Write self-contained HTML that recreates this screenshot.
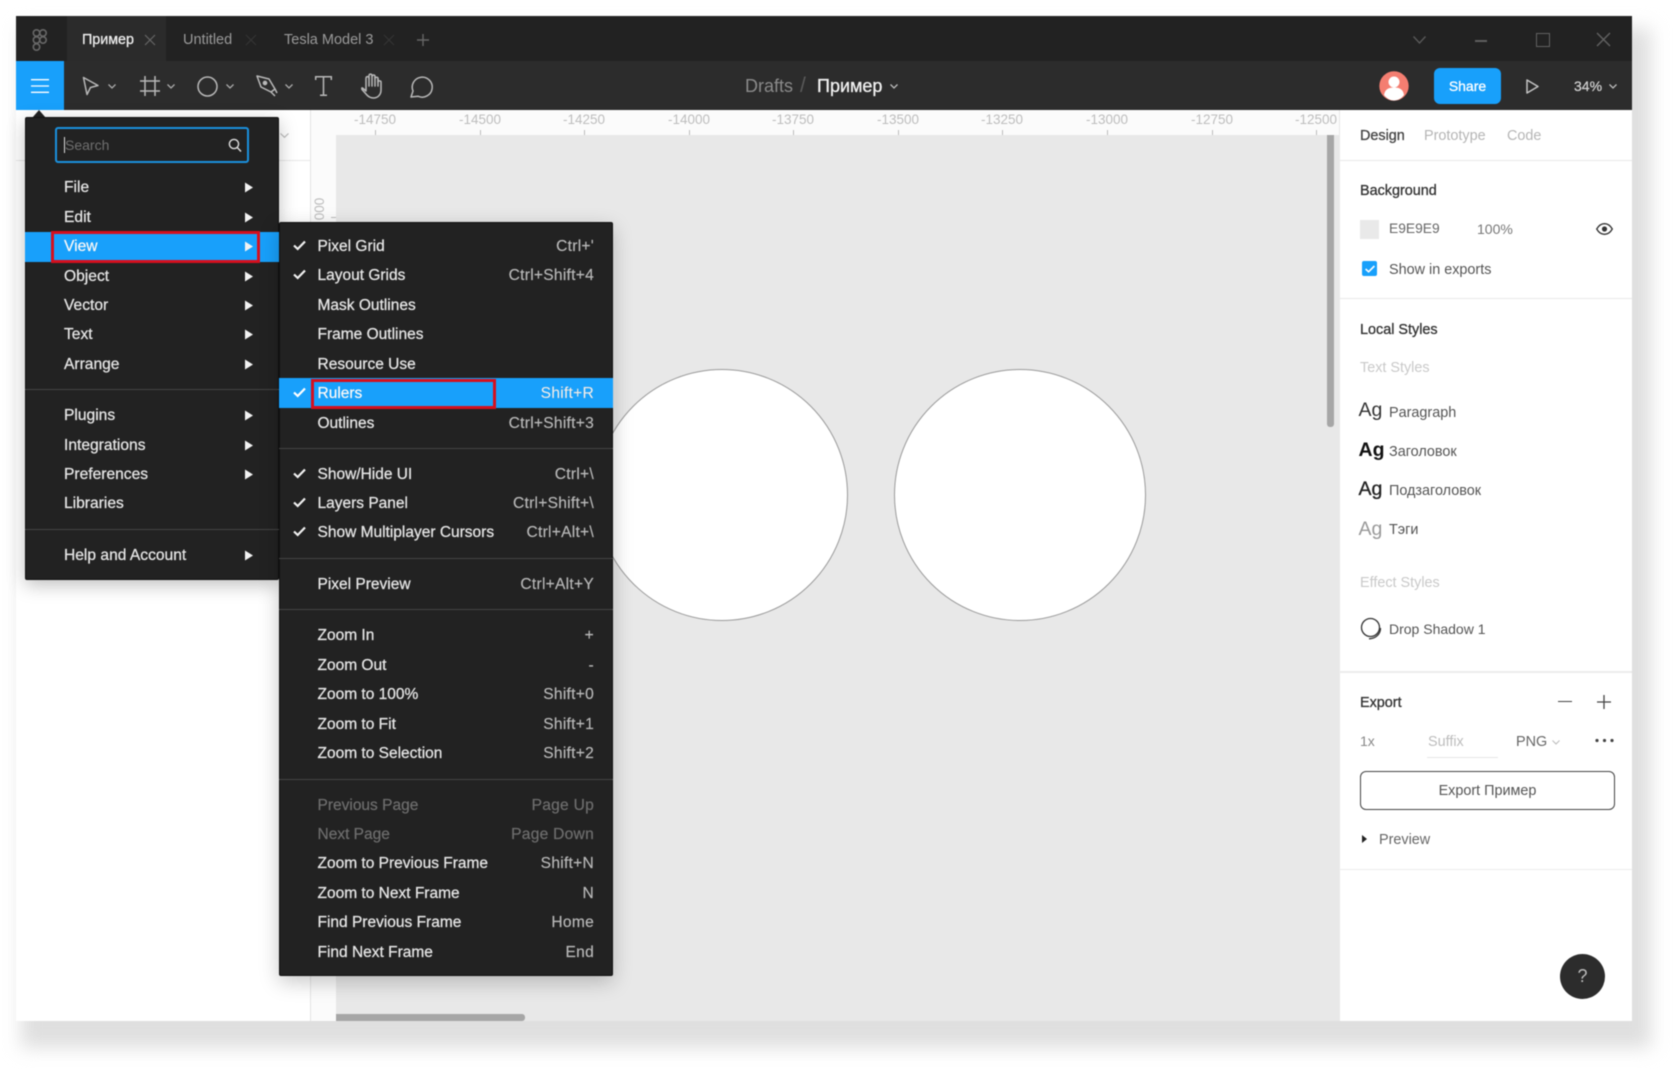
<!DOCTYPE html>
<html lang="en"><head><meta charset="utf-8"><title>Figma View Rulers</title>
<style>
html,body{margin:0;padding:0;width:1680px;height:1069px;overflow:hidden;background:#fff}
#r{position:absolute;left:0;top:0;width:1680px;height:1069px;overflow:hidden;font-family:"Liberation Sans","Noto Sans CJK SC",sans-serif;filter:blur(.45px)}
.b{position:absolute}
.t{position:absolute;white-space:nowrap;transform:translateY(-50%);line-height:20px}
.m{font-size:15.6px;color:#e6e6e6;-webkit-text-stroke:.25px #e6e6e6;left:64px;transform:translateY(calc(-50% + 1px))}
.s{font-size:15.5px;color:#e6e6e6;-webkit-text-stroke:.25px #e6e6e6;left:317.5px;transform:translateY(calc(-50% + 1px))}
.k{font-size:15.6px;letter-spacing:.25px;color:#b9b9b9;-webkit-text-stroke:.15px #b9b9b9;right:1086px;transform:translateY(calc(-50% + 1px))}
.d{color:#6e6e6e;-webkit-text-stroke:.2px #6e6e6e}
.rn{font-size:13.5px;color:#bdbdbd;transform:translate(-50%,-50%)}
.tk{position:absolute;top:130px;width:1px;height:5px;background:#bbb}
.p{font-size:14.4px;color:#555;transform:translateY(calc(-50% + 1px))}
.h{font-size:14.4px;color:#333;-webkit-text-stroke:.3px #333;left:1360px;transform:translateY(calc(-50% + 1px))}
.g{font-size:14.4px;color:#c9c9c9;left:1360px;transform:translateY(calc(-50% + 1px))}
.ag{font-size:19.5px;left:1358.5px;color:#333}
.ar{position:absolute;left:245px;width:0;height:0;border-left:8px solid #f2f2f2;border-top:5.5px solid transparent;border-bottom:5.5px solid transparent;transform:translateY(calc(-50% + .5px))}
.dv{position:absolute;height:1px;background:#444}
.ck{position:absolute;left:293px;transform:translateY(calc(-50% - .5px))}
svg{position:absolute;overflow:visible}
</style></head><body><div id="r">

<!-- window shadow -->
<div class="b" style="left:21px;top:28px;width:1630px;height:1020px;background:#dfdfdf;filter:blur(9px)"></div>
<!-- window -->
<div class="b" style="left:16px;top:16px;width:1616px;height:1005px;background:#fff"></div>

<!-- canvas -->
<div class="b" style="left:336px;top:135px;width:1004px;height:886px;background:#e8e8e8"></div>
<!-- rulers -->
<div class="b" style="left:310px;top:110px;width:1030px;height:25px;background:#fbfbfb"></div>
<div class="b" style="left:310px;top:110px;width:26px;height:911px;background:#fbfbfb;border-left:1px solid #e5e5e5;box-sizing:border-box"></div>
<div class="b" style="left:16px;top:160px;width:294px;height:1px;background:#e8e8e8"></div>
<svg style="left:280px;top:133px" width="9" height="5" fill="none" stroke="#bbb" stroke-width="1.2"><path d="M.5 .5L4.5 4.3L8.5 .5"/></svg>
<div class="t rn" style="left:375px;top:120px">-14750</div><i class="tk" style="left:375px"></i>
<div class="t rn" style="left:480px;top:120px">-14500</div><i class="tk" style="left:480px"></i>
<div class="t rn" style="left:584px;top:120px">-14250</div><i class="tk" style="left:584px"></i>
<div class="t rn" style="left:689px;top:120px">-14000</div><i class="tk" style="left:689px"></i>
<div class="t rn" style="left:793px;top:120px">-13750</div><i class="tk" style="left:793px"></i>
<div class="t rn" style="left:898px;top:120px">-13500</div><i class="tk" style="left:898px"></i>
<div class="t rn" style="left:1002px;top:120px">-13250</div><i class="tk" style="left:1002px"></i>
<div class="t rn" style="left:1107px;top:120px">-13000</div><i class="tk" style="left:1107px"></i>
<div class="t rn" style="left:1212px;top:120px">-12750</div><i class="tk" style="left:1212px"></i>
<div class="t rn" style="left:1316px;top:120px">-12500</div><i class="tk" style="left:1316px"></i>
<div class="t rn" style="left:320px;top:209px;transform:translate(-50%,-50%) rotate(-90deg)">000</div>
<div class="b" style="left:331px;top:217px;width:5px;height:1px;background:#bbb"></div>

<!-- circles -->
<div class="b" style="left:596px;top:369px;width:252px;height:252px;border-radius:50%;background:#fff;border:1px solid #9a9a9a;box-sizing:border-box"></div>
<div class="b" style="left:894px;top:369px;width:252px;height:252px;border-radius:50%;background:#fff;border:1px solid #9a9a9a;box-sizing:border-box"></div>

<!-- scrollbars -->
<div class="b" style="left:1327px;top:135px;width:7px;height:292px;background:#a6a6a6;border-radius:0 0 3px 3px"></div>
<div class="b" style="left:336px;top:1014px;width:189px;height:7px;background:#a6a6a6;border-radius:0 3px 3px 0"></div>

<!-- tab bar -->
<div class="b" style="left:16px;top:16px;width:1616px;height:45px;background:#222"></div>
<div class="b" style="left:67px;top:16px;width:99px;height:45px;background:#2b2b2b"></div>
<svg style="left:32px;top:29px" width="16" height="22" viewBox="0 0 16 22" fill="none" stroke="#686868" stroke-width="1.6"><circle cx="4.5" cy="4" r="3.2"/><circle cx="11" cy="4" r="3.2"/><circle cx="4.5" cy="11" r="3.2"/><circle cx="11" cy="11" r="3.2"/><circle cx="4.5" cy="18" r="3.2"/></svg>
<div class="t" style="left:82px;top:40px;font-size:14.3px;color:#f0f0f0;-webkit-text-stroke:.25px #f0f0f0">Пример</div>
<svg style="left:145px;top:35px" width="10" height="10" stroke="#666" stroke-width="1.2"><path d="M0 0L10 10M10 0L0 10"/></svg>
<div class="t" style="left:183px;top:40px;font-size:14.5px;color:#9a9a9a">Untitled</div>
<svg style="left:246px;top:35px" width="10" height="10" stroke="#343434" stroke-width="1.2"><path d="M0 0L10 10M10 0L0 10"/></svg>
<div class="t" style="left:284px;top:40px;font-size:14.5px;color:#9a9a9a">Tesla Model 3</div>
<svg style="left:384px;top:35px" width="10" height="10" stroke="#343434" stroke-width="1.2"><path d="M0 0L10 10M10 0L0 10"/></svg>
<svg style="left:417px;top:34px" width="12" height="12" stroke="#666" stroke-width="1.4"><path d="M6 0V12M0 6H12"/></svg>
<svg style="left:1413px;top:36px" width="13" height="8" fill="none" stroke="#5a5a5a" stroke-width="1.3"><path d="M.5 .5L6.5 7L12.5 .5"/></svg>
<div class="b" style="left:1475px;top:40px;width:12px;height:1.5px;background:#5f5f5f"></div>
<div class="b" style="left:1536px;top:33px;width:12px;height:12px;border:1.4px solid #626262"></div>
<svg style="left:1597px;top:33px" width="13" height="13" stroke="#626262" stroke-width="1.4"><path d="M0 0L13 13M13 0L0 13"/></svg>

<!-- toolbar -->
<div class="b" style="left:16px;top:61px;width:1616px;height:49px;background:#2c2c2c"></div>
<div class="b" style="left:16px;top:61px;width:48px;height:49px;background:#18a0fb"></div>
<svg style="left:31px;top:79px" width="18" height="14" stroke="#fff" stroke-width="1.3"><path d="M0 .7H18M0 7H18M0 13.3H18"/></svg>
<svg style="left:82px;top:76px" width="18" height="20" fill="none" stroke="#b8b8b8" stroke-width="1.5" stroke-linejoin="round"><path d="M1.5 1.5L16 9.5L8.5 11.5L5 18.5Z"/></svg>
<svg style="left:108px;top:84px" width="8" height="5" fill="none" stroke="#aaa" stroke-width="1.3"><path d="M.5 .5L4 4L7.5 .5"/></svg>
<svg style="left:140px;top:76px" width="20" height="20" stroke="#b8b8b8" stroke-width="1.5" fill="none"><path d="M5 0V20M15 0V20M0 5H20M0 15H20"/></svg>
<svg style="left:167px;top:84px" width="8" height="5" fill="none" stroke="#aaa" stroke-width="1.3"><path d="M.5 .5L4 4L7.5 .5"/></svg>
<svg style="left:197px;top:76px" width="21" height="21" fill="none" stroke="#b8b8b8" stroke-width="1.5"><circle cx="10.5" cy="10.5" r="9.5"/></svg>
<svg style="left:226px;top:84px" width="8" height="5" fill="none" stroke="#aaa" stroke-width="1.3"><path d="M.5 .5L4 4L7.5 .5"/></svg>
<svg style="left:256px;top:75px" width="22" height="22" fill="none" stroke="#b8b8b8" stroke-width="1.5" stroke-linejoin="round"><path d="M1 1L13 4L19 14L15 17L5 12Z"/><path d="M15 17L19 21M19 14L21 18"/><circle cx="9" cy="8" r="1.6" fill="#b8b8b8"/></svg>
<svg style="left:285px;top:84px" width="8" height="5" fill="none" stroke="#aaa" stroke-width="1.3"><path d="M.5 .5L4 4L7.5 .5"/></svg>
<svg style="left:315px;top:76px" width="17" height="20" fill="none" stroke="#b8b8b8" stroke-width="1.5"><path d="M.7 4V.8H16.3V4M8.5 .8V19.3M5 19.3H12"/></svg>
<svg style="left:361px;top:73px" width="23" height="26" fill="none" stroke="#b8b8b8" stroke-width="1.5" stroke-linecap="round" stroke-linejoin="round"><path d="M1.5 15L5 18V5.5C5 3 8 3 8 5.5V3C8 .5 11 .5 11 3V3.5C11 1.5 14 1.5 14 3.5V5.5C14 3.8 17 3.8 17 5.5V9C17 7.5 20 7.5 20 9V17C20 22 16.5 25 12.5 25C9 25 7 23.5 5 21L1 16.5C.5 15 1 14.5 1.5 15Z"/><path d="M8 5V13M11 3V13M14 4V13M17 6V13"/></svg>
<svg style="left:410px;top:75px" width="23" height="23" fill="none" stroke="#b8b8b8" stroke-width="1.5" stroke-linejoin="round"><path d="M1 22L3 16A10 10 0 1 1 8 21.2Z"/></svg>

<div class="t" style="left:745px;top:86px;font-size:18px;color:#8a8a8a">Drafts</div>
<div class="t" style="left:800px;top:86px;font-size:21px;color:#5a5a5a">/</div>
<div class="t" style="left:817px;top:86px;font-size:18px;color:#f2f2f2;-webkit-text-stroke:.3px #f2f2f2">Пример</div>
<svg style="left:890px;top:84px" width="8" height="5" fill="none" stroke="#bbb" stroke-width="1.3"><path d="M.5 .5L4 4L7.5 .5"/></svg>

<svg style="left:1379px;top:71px" width="30" height="30"><circle cx="15" cy="15" r="14.7" fill="#f47e71"/><circle cx="15" cy="11" r="5.5" fill="#fff"/><path d="M5 24C6 18 10 16.5 15 16.5C20 16.5 24 18 25 24C22 28 18 29.5 15 29.5C12 29.5 8 28 5 24Z" fill="#fff"/></svg>
<div class="b" style="left:1434px;top:68px;width:67px;height:36px;background:#18a0fb;border-radius:6px"></div>
<div class="t" style="left:1434px;width:67px;text-align:center;top:86px;font-size:14px;color:#fff;-webkit-text-stroke:.3px #fff">Share</div>
<svg style="left:1526px;top:79px" width="13" height="15" fill="none" stroke="#c4c4c4" stroke-width="1.5" stroke-linejoin="round"><path d="M1 1V14L12 7.5Z"/></svg>
<div class="t" style="left:1574px;top:86px;font-size:14px;color:#d0d0d0;-webkit-text-stroke:.25px #d0d0d0">34%</div>
<svg style="left:1609px;top:84px" width="8" height="5" fill="none" stroke="#bbb" stroke-width="1.3"><path d="M.5 .5L4 4L7.5 .5"/></svg>

<!-- right panel -->
<div class="b" style="left:1339px;top:110px;width:293px;height:911px;background:#fff;border-left:1px solid #e8e8e8;box-sizing:border-box"></div>
<div class="t" style="left:1360px;top:136px;font-size:14.4px;color:#444;-webkit-text-stroke:.3px #444">Design</div>
<div class="t" style="left:1424px;top:136px;font-size:14.4px;color:#b5b5b5">Prototype</div>
<div class="t" style="left:1507px;top:136px;font-size:14.4px;color:#b5b5b5">Code</div>
<div class="b" style="left:1339px;top:160px;width:293px;height:1px;background:#e8e8e8"></div>
<div class="t h" style="top:190px">Background</div>
<div class="b" style="left:1360px;top:220px;width:19px;height:19px;background:#e9e9e9"></div>
<div class="t p" style="left:1389px;top:228px;color:#666;font-size:13.8px">E9E9E9</div>
<div class="t p" style="left:1477px;top:228px;color:#777;font-size:14px">100%</div>
<svg style="left:1596px;top:223px" width="17" height="12" fill="none" stroke="#333" stroke-width="1.3"><path d="M.7 6C3 2 5.5 .7 8.5 .7C11.5 .7 14 2 16.3 6C14 10 11.5 11.3 8.5 11.3C5.5 11.3 3 10 .7 6Z"/><circle cx="8.5" cy="6" r="2.6" fill="#333" stroke="none"/></svg>
<div class="b" style="left:1362px;top:261px;width:15px;height:15px;background:#18a0fb;border-radius:2px"></div>
<svg style="left:1365px;top:265px" width="10" height="8" fill="none" stroke="#fff" stroke-width="1.6"><path d="M.6 4L3.6 6.8L9.4 1"/></svg>
<div class="t p" style="left:1389px;top:268.5px;color:#555">Show in exports</div>
<div class="b" style="left:1339px;top:298px;width:293px;height:1px;background:#e8e8e8"></div>

<div class="t h" style="top:328.5px">Local Styles</div>
<div class="t g" style="top:366.5px">Text Styles</div>
<div class="t ag" style="top:410px">Ag</div>
<div class="t p" style="left:1389px;top:412px">Paragraph</div>
<div class="t ag" style="top:450px;font-weight:700;color:#111">Ag</div>
<div class="t p" style="left:1389px;top:451px">Заголовок</div>
<div class="t ag" style="top:489px;color:#222;-webkit-text-stroke:.3px #222">Ag</div>
<div class="t p" style="left:1389px;top:490px">Подзаголовок</div>
<div class="t ag" style="top:529px;color:#999">Ag</div>
<div class="t p" style="left:1389px;top:529px">Тэги</div>
<div class="t g" style="top:582px">Effect Styles</div>
<svg style="left:1360px;top:617px" width="22" height="23" fill="none" stroke="#333" stroke-width="1.3"><circle cx="10.5" cy="10.5" r="9"/><path d="M20.5 11C20.5 17 16 21.5 9 21.8"/></svg>
<div class="t p" style="left:1389px;top:628px;font-size:14px">Drop Shadow 1</div>
<div class="b" style="left:1339px;top:671px;width:293px;height:2px;background:#ececec"></div>

<div class="t h" style="top:702px">Export</div>
<div class="b" style="left:1558px;top:701px;width:14px;height:1.3px;background:#444"></div>
<svg style="left:1597px;top:695px" width="14" height="14" stroke="#444" stroke-width="1.3"><path d="M7 0V14M0 7H14"/></svg>
<div class="t p" style="left:1360px;top:740px;color:#888;font-size:14px">1x</div>
<div class="t p" style="left:1428px;top:741px;color:#bdbdbd">Suffix</div>
<div class="b" style="left:1427px;top:757px;width:71px;height:1px;background:#e6e6e6"></div>
<div class="t p" style="left:1516px;top:741px;color:#666">PNG</div>
<svg style="left:1552px;top:740px" width="8" height="5" fill="none" stroke="#bbb" stroke-width="1"><path d="M.5 .5L4 4L7.5 .5"/></svg>
<svg style="left:1595px;top:738px" width="19" height="5" fill="#444"><circle cx="2" cy="2.5" r="1.6"/><circle cx="9.5" cy="2.5" r="1.6"/><circle cx="17" cy="2.5" r="1.6"/></svg>
<div class="b" style="left:1360px;top:771px;width:255px;height:39px;border:1.4px solid #444;border-radius:6px;box-sizing:border-box"></div>
<div class="t p" style="left:1360px;width:255px;text-align:center;top:790px;color:#555">Export Пример</div>
<div class="b" style="left:1362px;top:835px;width:0;height:0;border-left:5px solid #222;border-top:4px solid transparent;border-bottom:4px solid transparent"></div>
<div class="t p" style="left:1379px;top:839px;color:#666">Preview</div>
<div class="b" style="left:1339px;top:869px;width:293px;height:1px;background:#ececec"></div>
<div class="b" style="left:1560px;top:954px;width:45px;height:45px;border-radius:50%;background:#2c2c2c"></div>
<div class="t" style="left:1560px;width:45px;text-align:center;top:976px;font-size:18px;color:#bbb">?</div>

<!-- main menu -->
<svg style="left:31px;top:110px" width="16" height="8"><path d="M1 8L8 0L15 8Z" fill="#222"/></svg>
<div class="b" style="left:25px;top:117px;width:254px;height:463px;background:#222;border:1px solid #111;border-radius:2px;box-sizing:border-box;box-shadow:0 5px 18px rgba(0,0,0,.25)"></div>
<div class="b" style="left:55px;top:127px;width:194px;height:36px;border:2px solid #1b90dd;border-radius:3px;box-sizing:border-box"></div>
<div class="b" style="left:64px;top:137px;width:1px;height:16px;background:#ddd"></div>
<div class="t" style="left:65px;top:145px;font-size:14px;color:#6f6f6f">Search</div>
<svg style="left:228px;top:138px" width="14" height="15" fill="none" stroke="#ddd" stroke-width="1.4"><circle cx="6" cy="6" r="4.6"/><path d="M9.4 9.6L13 13.5"/></svg>

<div class="b" style="left:25px;top:232px;width:254px;height:30px;background:#18a0fb"></div>
<div class="b" style="left:50.5px;top:231px;width:209.5px;height:32px;border:3px solid #d60f1e;box-sizing:border-box"></div>
<div class="t m" style="top:187px">File</div><i class="ar" style="top:187px"></i>
<div class="t m" style="top:217px">Edit</div><i class="ar" style="top:217px"></i>
<div class="t m" style="top:246px;color:#fff">View</div><i class="ar" style="top:246px"></i>
<div class="t m" style="top:276px">Object</div><i class="ar" style="top:276px"></i>
<div class="t m" style="top:305px">Vector</div><i class="ar" style="top:305px"></i>
<div class="t m" style="top:334px">Text</div><i class="ar" style="top:334px"></i>
<div class="t m" style="top:364px">Arrange</div><i class="ar" style="top:364px"></i>
<div class="dv" style="left:25px;top:389px;width:254px"></div>
<div class="t m" style="top:415px">Plugins</div><i class="ar" style="top:415px"></i>
<div class="t m" style="top:445px">Integrations</div><i class="ar" style="top:445px"></i>
<div class="t m" style="top:474px">Preferences</div><i class="ar" style="top:474px"></i>
<div class="t m" style="top:503px">Libraries</div>
<div class="dv" style="left:25px;top:529px;width:254px"></div>
<div class="t m" style="top:555px">Help and Account</div><i class="ar" style="top:555px"></i>

<!-- view submenu -->
<div class="b" style="left:279px;top:222px;width:334px;height:754px;background:#222;border:1px solid #111;border-radius:2px;box-sizing:border-box;box-shadow:0 6px 20px rgba(0,0,0,.22)"></div>
<div class="b" style="left:279px;top:378px;width:334px;height:30px;background:#18a0fb"></div>
<div class="b" style="left:311px;top:379px;width:185px;height:30px;border:3px solid #d60f1e;box-sizing:border-box"></div>

<svg class="ck" style="top:246px" width="13" height="11" fill="none" stroke="#f0f0f0" stroke-width="2.2"><path d="M1 5.5L4.7 9L12 1.5"/></svg>
<svg class="ck" style="top:275px" width="13" height="11" fill="none" stroke="#f0f0f0" stroke-width="2.2"><path d="M1 5.5L4.7 9L12 1.5"/></svg>
<svg class="ck" style="top:393px" width="13" height="11" fill="none" stroke="#fff" stroke-width="2.2"><path d="M1 5.5L4.7 9L12 1.5"/></svg>
<svg class="ck" style="top:474px" width="13" height="11" fill="none" stroke="#f0f0f0" stroke-width="2.2"><path d="M1 5.5L4.7 9L12 1.5"/></svg>
<svg class="ck" style="top:503px" width="13" height="11" fill="none" stroke="#f0f0f0" stroke-width="2.2"><path d="M1 5.5L4.7 9L12 1.5"/></svg>
<svg class="ck" style="top:532px" width="13" height="11" fill="none" stroke="#f0f0f0" stroke-width="2.2"><path d="M1 5.5L4.7 9L12 1.5"/></svg>

<div class="t s" style="top:246px">Pixel Grid</div><div class="t k" style="top:246px">Ctrl+'</div>
<div class="t s" style="top:275px">Layout Grids</div><div class="t k" style="top:275px">Ctrl+Shift+4</div>
<div class="t s" style="top:305px">Mask Outlines</div>
<div class="t s" style="top:334px">Frame Outlines</div>
<div class="t s" style="top:364px">Resource Use</div>
<div class="t s" style="top:393px;color:#fff">Rulers</div><div class="t k" style="top:393px;color:#f4f4f4">Shift+R</div>
<div class="t s" style="top:423px">Outlines</div><div class="t k" style="top:423px">Ctrl+Shift+3</div>
<div class="dv" style="left:279px;top:448px;width:334px"></div>
<div class="t s" style="top:474px">Show/Hide UI</div><div class="t k" style="top:474px">Ctrl+\</div>
<div class="t s" style="top:503px">Layers Panel</div><div class="t k" style="top:503px">Ctrl+Shift+\</div>
<div class="t s" style="top:532px">Show Multiplayer Cursors</div><div class="t k" style="top:532px">Ctrl+Alt+\</div>
<div class="dv" style="left:279px;top:558px;width:334px"></div>
<div class="t s" style="top:584px">Pixel Preview</div><div class="t k" style="top:584px">Ctrl+Alt+Y</div>
<div class="dv" style="left:279px;top:609px;width:334px"></div>
<div class="t s" style="top:635px">Zoom In</div><div class="t k" style="top:635px">+</div>
<div class="t s" style="top:665px">Zoom Out</div><div class="t k" style="top:665px">-</div>
<div class="t s" style="top:694px">Zoom to 100%</div><div class="t k" style="top:694px">Shift+0</div>
<div class="t s" style="top:724px">Zoom to Fit</div><div class="t k" style="top:724px">Shift+1</div>
<div class="t s" style="top:753px">Zoom to Selection</div><div class="t k" style="top:753px">Shift+2</div>
<div class="dv" style="left:279px;top:779px;width:334px"></div>
<div class="t s d" style="top:805px">Previous Page</div><div class="t k d" style="top:805px">Page Up</div>
<div class="t s d" style="top:834px">Next Page</div><div class="t k d" style="top:834px">Page Down</div>
<div class="t s" style="top:863px">Zoom to Previous Frame</div><div class="t k" style="top:863px">Shift+N</div>
<div class="t s" style="top:893px">Zoom to Next Frame</div><div class="t k" style="top:893px">N</div>
<div class="t s" style="top:922px">Find Previous Frame</div><div class="t k" style="top:922px">Home</div>
<div class="t s" style="top:952px">Find Next Frame</div><div class="t k" style="top:952px">End</div>

</div></body></html>
